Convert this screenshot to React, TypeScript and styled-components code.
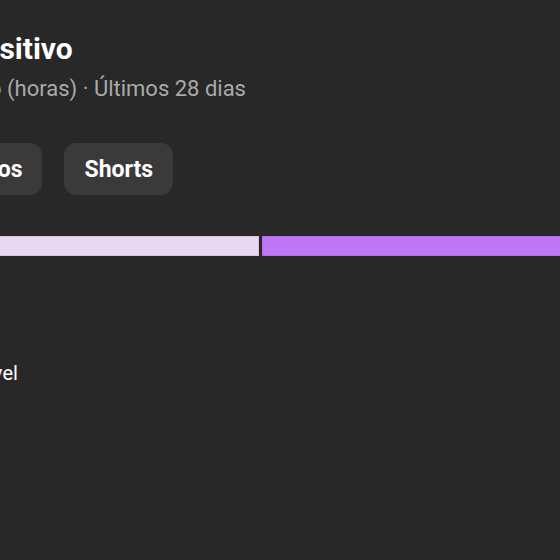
import styled, { createGlobalStyle } from "styled-components";

const GlobalStyle = createGlobalStyle`
  html, body {
    margin: 0;
    padding: 0;
    background: #282828;
  }
  body {
    font-family: Roboto, "Noto Sans", Arial, sans-serif;
  }
`;

const Viewport = styled.div`
  width: 560px;
  height: 560px;
  overflow: hidden;
  background: #282828;
`;

const Card = styled.section`
  width: 1100px;
  margin-left: -183px;
  padding-top: 29px;
  display: flex;
  flex-direction: column;
`;

const Title = styled.h2`
  margin: 0;
  font-size: 30px;
  line-height: 40px;
  font-weight: 700;
  color: #ffffff;
`;

const Subtitle = styled.p`
  margin: 6px 0 0;
  font-size: 22px;
  line-height: 28px;
  color: #aaaaaa;
`;

const Chips = styled.div`
  display: flex;
  gap: 22px;
  margin-top: 40px;
  padding-left: 114px;
`;

const Chip = styled.button<{ $active?: boolean }>`
  height: 52px;
  padding: 0 20px;
  border: none;
  border-radius: 12px;
  background: ${(p) => (p.$active ? "#4a4a4a" : "#3a3a3a")};
  color: #ffffff;
  font-family: inherit;
  font-size: 23px;
  font-weight: 700;
`;

const Bar = styled.div`
  display: flex;
  gap: 3px;
  height: 20px;
  margin-top: 41px;
`;

const Segment = styled.div<{ $color: string; $edge: string }>`
  flex: none;
  height: 100%;
  background: ${(p) => p.$color};
  box-shadow: inset 0 0 0 1px ${(p) => p.$edge};
`;

const Legend = styled.ul`
  list-style: none;
  margin: 104px 0 0;
  padding: 0 0 0 110px;
`;

const LegendItem = styled.li`
  font-size: 20px;
  line-height: 26px;
  color: #ffffff;
`;

const segments = [
  { label: "Telemóvel", width: 442, color: "#e8d9f1", edge: "#d6c6e2" },
  { label: "Computador", width: 600, color: "#c077f5", edge: "#b56cea" },
];

export default function App() {
  return (
    <Viewport>
      <GlobalStyle />
      <Card>
        <Title>Tipo de dispositivo</Title>
        <Subtitle>Tempo de exibição (horas) · Últimos 28 dias</Subtitle>
        <Chips>
          <Chip>Vídeos</Chip>
          <Chip>Shorts</Chip>
        </Chips>
        <Bar>
          {segments.map((s) => (
            <Segment
              key={s.label}
              $color={s.color}
              $edge={s.edge}
              style={{ width: s.width }}
            />
          ))}
        </Bar>
        <Legend>
          <LegendItem>Telemóvel</LegendItem>
        </Legend>
      </Card>
    </Viewport>
  );
}
